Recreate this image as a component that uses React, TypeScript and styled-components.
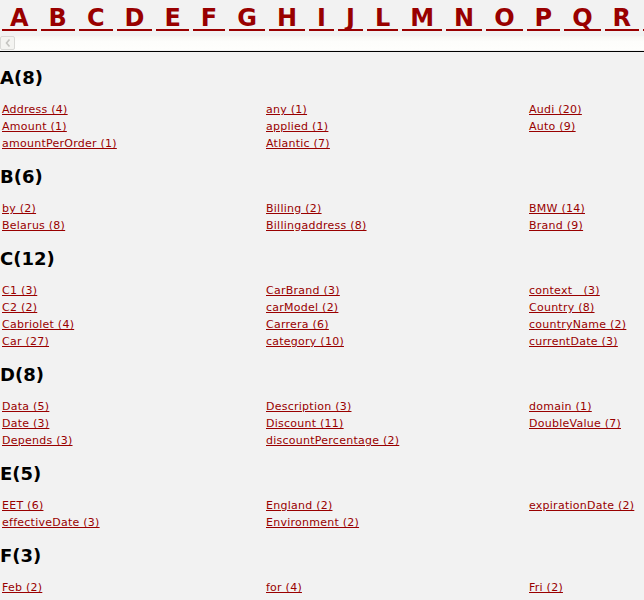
import React from 'react';
import styled, { createGlobalStyle } from 'styled-components';

const GlobalStyle = createGlobalStyle`
  html, body {
    margin: 0;
    padding: 0;
    overflow: hidden;
    background: #f2f2f2;
  }
  body {
    font-family: 'DejaVu Sans', Verdana, sans-serif;
  }
`;

const Page = styled.div`
  width: 800px;
`;

const LetterBar = styled.div`
  padding: 8px 0 0 2px;
  white-space: nowrap;
  overflow: hidden;
  width: 642px;
`;

const LetterLink = styled.a`
  display: inline-block;
  margin-right: 4px;
  padding: 0 8px;
  font-size: 24px;
  font-weight: bold;
  line-height: 21px;
  color: #990000;
  text-decoration: none;
  border-bottom: 2px solid #990000;
  cursor: pointer;
`;

const ScrollTrack = styled.div`
  margin-top: 5px;
  width: 644px;
  height: 14px;
  display: flex;
  background: linear-gradient(#f6f6f2, #fdfdfb 40%, #fefefc);
  border-bottom: 1px solid #f2f2f2;
`;

const ScrollButton = styled.div`
  width: 15px;
  height: 14px;
  box-sizing: border-box;
  border: 1px solid #d9d9d6;
  border-radius: 2px;
  background: #f4f4f1;
  display: flex;
  align-items: center;
  justify-content: center;
`;

const Divider = styled.div`
  width: 644px;
  height: 1px;
  background: #000;
`;

const Content = styled.div`
  padding-top: 15px;
`;

const Heading = styled.h3`
  margin: 0 0 12px 0;
  font-size: 18px;
  line-height: 22px;
  font-weight: bold;
  color: #000;
`;

const Terms = styled.div<{ rows: number }>`
  display: grid;
  grid-template-columns: 264px 263px 1fr;
  grid-template-rows: repeat(${(p) => p.rows}, 17px);
  grid-auto-flow: column;
  padding-left: 2px;
  margin-bottom: 14px;
  width: 642px;
`;

const TermLink = styled.a`
  font-size: 11px;
  line-height: 17px;
  letter-spacing: 0.25px;
  color: #990000;
  text-decoration: underline;
  white-space: pre;
  justify-self: start;
  cursor: pointer;
`;

const letters = ['A', 'B', 'C', 'D', 'E', 'F', 'G', 'H', 'I', 'J', 'L', 'M', 'N', 'O', 'P', 'Q', 'R', 'S', 'T', 'U', 'V', 'W'];

const sections: { letter: string; terms: string[] }[] = [
  {
    letter: 'A',
    terms: ['Address (4)', 'Amount (1)', 'amountPerOrder (1)', 'any (1)', 'applied (1)', 'Atlantic (7)', 'Audi (20)', 'Auto (9)'],
  },
  {
    letter: 'B',
    terms: ['by (2)', 'Belarus (8)', 'Billing (2)', 'Billingaddress (8)', 'BMW (14)', 'Brand (9)'],
  },
  {
    letter: 'C',
    terms: [
      'C1 (3)',
      'C2 (2)',
      'Cabriolet (4)',
      'Car (27)',
      'CarBrand (3)',
      'carModel (2)',
      'Carrera (6)',
      'category (10)',
      'context   (3)',
      'Country (8)',
      'countryName (2)',
      'currentDate (3)',
    ],
  },
  {
    letter: 'D',
    terms: ['Data (5)', 'Date (3)', 'Depends (3)', 'Description (3)', 'Discount (11)', 'discountPercentage (2)', 'domain (1)', 'DoubleValue (7)'],
  },
  {
    letter: 'E',
    terms: ['EET (6)', 'effectiveDate (3)', 'England (2)', 'Environment (2)', 'expirationDate (2)'],
  },
  {
    letter: 'F',
    terms: ['Feb (2)', 'for (4)', 'Fri (2)'],
  },
];

const App = () => {
  return (
    <>
      <GlobalStyle />
      <Page>
        <LetterBar>
          {letters.map((l) => (
            <LetterLink key={l}>{l}</LetterLink>
          ))}
        </LetterBar>
        <ScrollTrack>
          <ScrollButton>
            <svg width="6" height="8" viewBox="0 0 6 8">
              <path d="M4.5 0.5 L1.5 4 L4.5 7.5" fill="none" stroke="#c4c4c0" strokeWidth="1.6" />
            </svg>
          </ScrollButton>
        </ScrollTrack>
        <Divider />
        <Content>
          {sections.map((s) => (
            <section key={s.letter}>
              <Heading>
                {s.letter}({s.terms.length})
              </Heading>
              <Terms rows={Math.ceil(s.terms.length / 3)}>
                {s.terms.map((t) => (
                  <TermLink key={t}>{t}</TermLink>
                ))}
              </Terms>
            </section>
          ))}
        </Content>
      </Page>
    </>
  );
};

export default App;
